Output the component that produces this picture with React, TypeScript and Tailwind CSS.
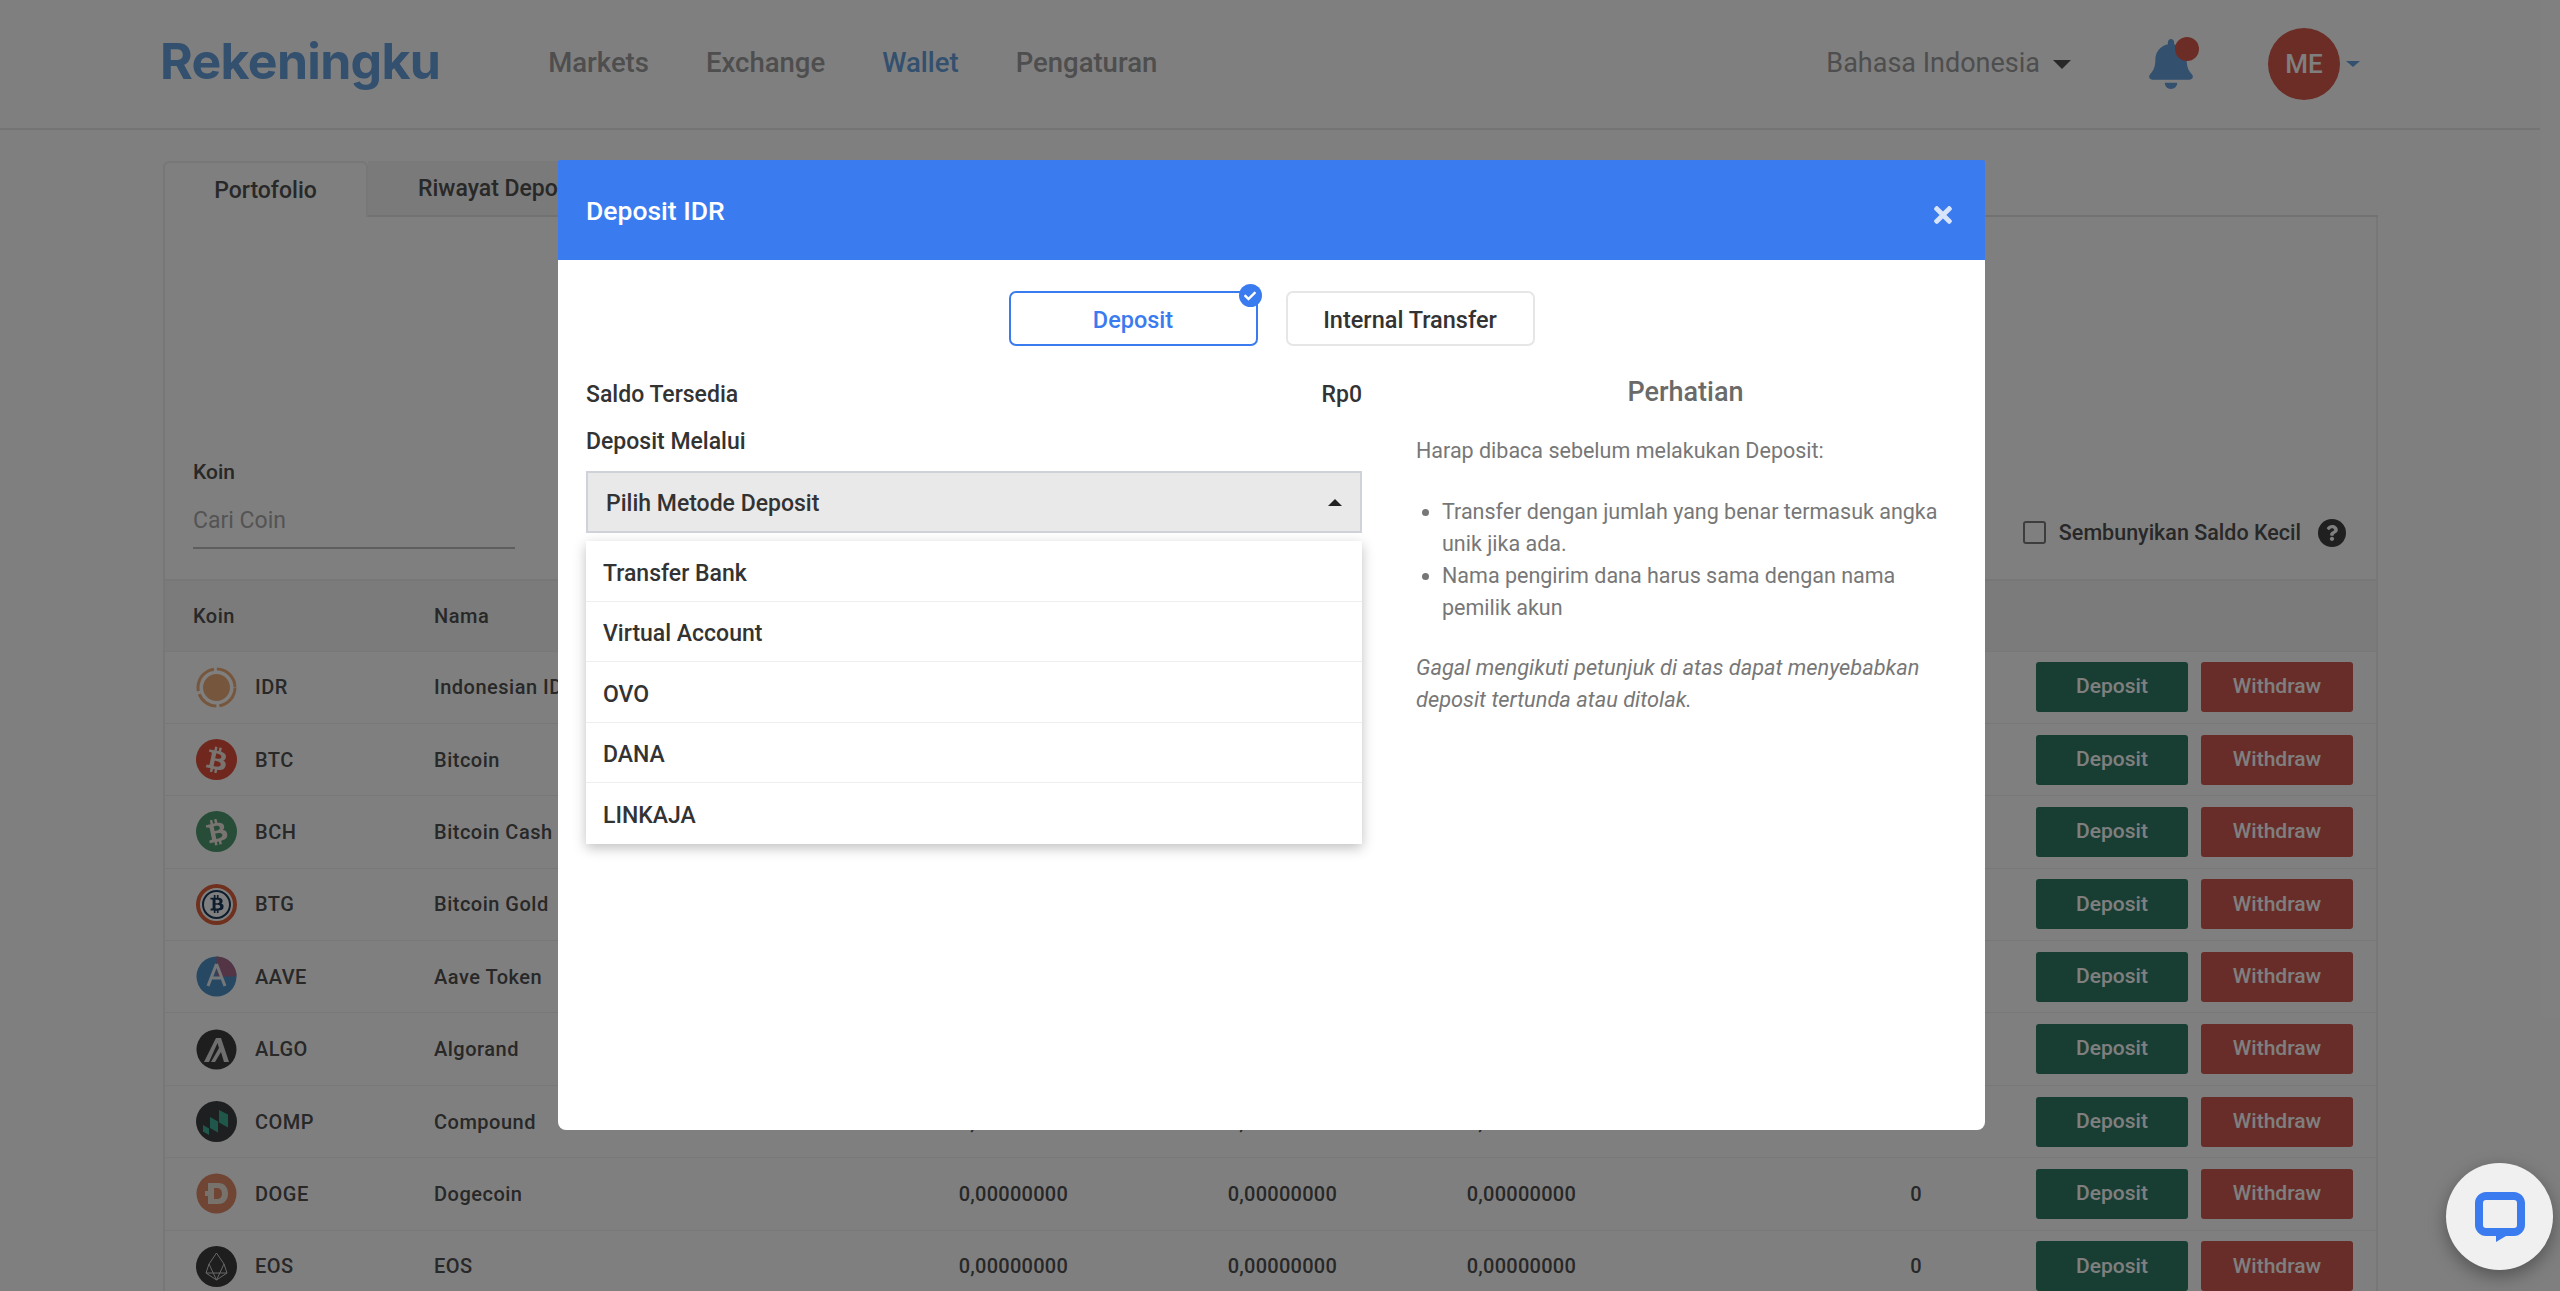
import { FaBell, FaBtc, FaCheck, FaQuestion, FaTimes } from 'react-icons/fa';

const navItems = [
  { name: 'Markets', active: false },
  { name: 'Exchange', active: false },
  { name: 'Wallet', active: true },
  { name: 'Pengaturan', active: false },
];

const coins = [
  { symbol: 'IDR', name: 'Indonesian IDR' },
  { symbol: 'BTC', name: 'Bitcoin' },
  { symbol: 'BCH', name: 'Bitcoin Cash' },
  { symbol: 'BTG', name: 'Bitcoin Gold' },
  { symbol: 'AAVE', name: 'Aave Token' },
  { symbol: 'ALGO', name: 'Algorand' },
  { symbol: 'COMP', name: 'Compound' },
  { symbol: 'DOGE', name: 'Dogecoin' },
  { symbol: 'EOS', name: 'EOS' },
];

const depositMethods = ['Transfer Bank', 'Virtual Account', 'OVO', 'DANA', 'LINKAJA'];

const CoinIcon = ({ symbol }: { symbol: string }) => {
  if (symbol === 'BTC' || symbol === 'BCH') {
    return (
      <div className={`flex h-[41px] w-[41px] items-center justify-center rounded-full ${symbol === 'BTC' ? 'bg-[#e0503c]' : 'bg-[#4e9a70]'}`}>
        <FaBtc className={`h-[26px] w-[26px] text-[#f4e8e0] ${symbol === 'BTC' ? 'rotate-12' : '-rotate-12'}`} />
      </div>
    );
  }
  if (symbol === 'BTG') {
    return (
      <div className="flex h-[41px] w-[41px] items-center justify-center rounded-full border-[4px] border-[#e0603c] bg-white">
        <div className="flex h-[29px] w-[29px] items-center justify-center rounded-full border-2 border-[#1c3a5c]">
          <FaBtc className="h-[18px] w-[18px] text-[#1c3a5c]" />
        </div>
      </div>
    );
  }
  return (
    <svg viewBox="0 0 41 41" className="h-[41px] w-[41px]">
      {symbol === 'IDR' && (
        <>
          <circle cx="20.5" cy="20.5" r="13.5" fill="#ecae7c" />
          <circle cx="20.5" cy="20.5" r="18.5" fill="none" stroke="#ecae7c" strokeWidth="3" strokeDasharray="26 3 22 3 30 3 28 3" />
        </>
      )}
      {symbol === 'AAVE' && (
        <>
          <circle cx="20.5" cy="20.5" r="20" fill="#4f90c6" />
          <path d="M20.5 0.5a20 20 0 0 1 20 20H20.5z" fill="#a86a8a" />
          <path d="M20.5 8 12 30M20.5 8 29 30M14 22h13" fill="none" stroke="#e8f0f4" strokeWidth="3" />
        </>
      )}
      {symbol === 'ALGO' && (
        <>
          <circle cx="20.5" cy="20.5" r="20" fill="#3c3c3c" />
          <path d="M8 33 20 9h5l8 24h-5l-3-10-6 10h-4l8-14-1.500-5L13 33z" fill="#dcdcdc" />
        </>
      )}
      {symbol === 'COMP' && (
        <>
          <circle cx="20.5" cy="20.5" r="20.5" fill="#3a3f42" />
          <path d="M7 24l6 3.500v6.500l-6-3.500zM14 16l8 4.500v11l-8-4.500zM23 9l9 4.500v13l-9-5z" fill="#3fae97" />
        </>
      )}
      {symbol === 'DOGE' && (
        <>
          <circle cx="20.5" cy="20.5" r="20" fill="#e08a68" />
          <path d="M12 10h10c7 0 10 5 10 10.500S29 31 22 31H12v-8H9v-5h3zM18 15v11h3c3.500 0 5-2.500 5-5.500S24.500 15 21 15z" fill="#f0e4d8" fillRule="evenodd" />
        </>
      )}
      {symbol === 'EOS' && (
        <>
          <circle cx="20.5" cy="20.5" r="20.5" fill="#3c3c3c" />
          <path d="M20.500 7 13 18l-3 9 10.500 7L31 27l-3-9zM13 18l7.500 16L28 18M20.500 7v0M10 27h21" fill="none" stroke="#cfcfcf" strokeWidth="1" />
        </>
      )}
    </svg>
  );
};

const CoinRow = ({ symbol, name }: { symbol: string; name: string }) => (
  <div className="grid h-[72.4px] grid-cols-[269px_435px_199px_269px_239px_346px_1fr] items-center border-t border-[#f0f0f0] text-[20px] font-medium tracking-[0.5px] text-[#505050]">
    <div className="flex items-center pl-[31px]">
      <CoinIcon symbol={symbol} />
      <span className="ml-[18px]">{symbol}</span>
    </div>
    <div>{name}</div>
    <div className="text-right tracking-[0.25px]">0,00000000</div>
    <div className="text-right tracking-[0.25px]">0,00000000</div>
    <div className="text-right tracking-[0.25px]">0,00000000</div>
    <div className="text-right">0</div>
    <div className="flex gap-[13px] pl-[114px] tracking-normal text-white">
      <button className="h-[50px] w-[152px] rounded-[3px] bg-[#307a66] text-[21px]">Deposit</button>
      <button className="h-[50px] w-[152px] rounded-[3px] bg-[#d05a50] text-[21px]">Withdraw</button>
    </div>
  </div>
);

const App = () => {
  return (
    <div className="relative h-[1291px] w-[2560px] overflow-hidden bg-white font-['Roboto',sans-serif]">
      {/* Page behind the modal */}
      <div className="w-[2540px]">
        <nav className="flex h-[130px] items-center border-b-2 border-[#e8e8e8] pl-[160px]">
          <a className="-mt-[6px] font-['Inter',sans-serif] text-[50px] font-bold tracking-[-0.7px] text-[#66a0de]">Rekeningku</a>
          <div className="-mt-[2px] ml-[108px] flex gap-[57px] text-[27.500px] font-medium text-[#9c9c9c]">
            {navItems.map((item) => (
              <a key={item.name} className={item.active ? 'text-[#66a0de]' : ''}>
                {item.name}
              </a>
            ))}
          </div>
          <div className="ml-auto flex items-center pr-[180px]">
            <span className="-mt-[2px] text-[27px] text-[#9c9c9c]">Bahasa Indonesia</span>
            <span className="ml-[13px] h-0 w-0 border-x-[9px] border-t-[9px] border-x-transparent border-t-[#505050]" />
            <div className="relative ml-[78px]">
              <FaBell className="h-[50px] w-[44px] text-[#66a0de]" />
              <span className="absolute -right-[6px] -top-[2px] h-[24px] w-[24px] rounded-full bg-[#d85a4c]" />
            </div>
            <div className="ml-[75px] flex h-[72px] w-[72px] items-center justify-center rounded-full bg-[#d85a4c] text-[26px] font-medium text-white">
              ME
            </div>
            <span className="ml-[6px] h-0 w-0 border-x-[7px] border-t-[6px] border-x-transparent border-t-[#66a0de]" />
          </div>
        </nav>

        <main className="ml-[163px] mt-[31px] w-[2215px]">
          <div className="flex h-[56px] text-[23px] font-medium text-[#505050]">
            <div className="flex w-[205px] items-center justify-center rounded-t-[6px] border-x-2 border-t-2 border-[#eeeeee] pt-[3px]">Portofolio</div>
            <div className="flex w-[300px] items-center border-b-2 border-[#e4e4e4] bg-[#f4f4f4] pl-[50px] pt-[3px]">Riwayat Deposit</div>
            <div className="flex-1 border-b-2 border-[#e4e4e4]" />
          </div>

          <div className="border-x-2 border-[#eeeeee]">
            <div className="flex h-[362px] items-end justify-between pb-[30px] pl-[28px] pr-[30px]">
              <div className="w-[322px]">
                <div className="text-[21px] font-medium text-[#505050]">Koin</div>
                <div className="mt-[15px] border-b-2 border-[#bcbcbc] pb-[9px] text-[23px] text-[#a8a8a8]">Cari Coin</div>
              </div>
              <div className="flex items-center text-[21.500px] font-medium text-[#505050]">
                <span className="h-[23px] w-[23px] rounded-[3px] border-2 border-[#7a7a7a] bg-white" />
                <span className="ml-[13px]">Sembunyikan Saldo Kecil</span>
                <span className="ml-[17px] flex h-[28px] w-[28px] items-center justify-center rounded-full bg-[#404040]">
                  <FaQuestion className="h-[16px] w-[16px] text-white" />
                </span>
              </div>
            </div>
            <div className="grid h-[71.500px] grid-cols-[269px_1fr] items-center border-t-2 border-[#eeeeee] bg-[#f6f6f6] text-[20px] font-medium tracking-[0.5px] text-[#505050]">
              <div className="pl-[28px]">Koin</div>
              <div>Nama</div>
            </div>
            {coins.map((coin) => (
              <CoinRow key={coin.symbol} symbol={coin.symbol} name={coin.name} />
            ))}
          </div>
        </main>
      </div>

      {/* Modal */}
      <div className="absolute inset-0 bg-black/50 pl-[558px] pt-[160px]">
        <div className="h-[970px] w-[1427px] rounded-[8px] bg-white">
          <div className="flex h-[100px] items-center justify-between rounded-t-[2px] bg-[#3b7bf0] pl-[28px] pr-[30px] text-white">
            <h2 className="pt-[1px] text-[26.500px] font-medium">Deposit IDR</h2>
            <FaTimes className="mt-[10px] h-[26px] w-[24px] text-[#d8e4fa]" />
          </div>

          <div className="px-[28px]">
            <div className="flex justify-center gap-[28px] pt-[31px] text-[23.500px] font-medium">
              <button className="relative h-[55px] w-[249px] rounded-[7px] border-2 border-[#3b7bf0] pt-[4px] text-[#3b7bf0]">
                Deposit
                <span className="absolute -right-[6px] -top-[9px] flex h-[23px] w-[23px] items-center justify-center rounded-full bg-[#3b7bf0]">
                  <FaCheck className="h-[12px] w-[12px] text-white" />
                </span>
              </button>
              <button className="h-[55px] w-[249px] rounded-[7px] border-2 border-[#e6e6e6] pt-[4px] text-[#333333]">Internal Transfer</button>
            </div>

            <div className="mt-[33px] flex">
              <div className="w-[776px]">
                <div className="flex h-[30px] items-center justify-between pt-[2px] text-[23px] font-medium text-[#333333]">
                  <span>Saldo Tersedia</span>
                  <span>Rp0</span>
                </div>
                <div className="mt-[17px] flex h-[30px] items-center pt-[2px] text-[23px] font-medium text-[#333333]">Deposit Melalui</div>
                <div className="relative mt-[15px]">
                  <div className="flex h-[62px] items-center justify-between border-2 border-[#cfd2d8] bg-[#e9e9e9] px-[18px] text-[23px] font-medium text-[#333333]">
                    <span className="pt-[4px]">Pilih Metode Deposit</span>
                    <span className="h-0 w-0 border-x-[7px] border-b-[7px] border-x-transparent border-b-[#222222]" />
                  </div>
                  <ul className="absolute left-0 right-0 top-[70px] bg-white shadow-[0_4px_12px_rgba(0,0,0,0.25)]">
                    {depositMethods.map((method) => (
                      <li key={method} className="flex h-[60.600px] items-center border-b border-[#eeeeee] pl-[17px] pt-[6px] text-[23px] font-medium text-[#333333] last:border-b-0">
                        {method}
                      </li>
                    ))}
                  </ul>
                </div>
              </div>

              <div className="ml-[54px] w-[525px] text-[21.500px] leading-[32px] text-[#777777]">
                <h3 className="h-[30px] pl-[14px] text-center text-[27px] leading-[26px] font-medium text-[#6a6a6a]">Perhatian</h3>
                <p className="mt-[26px]">Harap dibaca sebelum melakukan Deposit:</p>
                <ul className="mt-[29px] list-disc pl-[26px]">
                  <li>Transfer dengan jumlah yang benar termasuk angka unik jika ada.</li>
                  <li>Nama pengirim dana harus sama dengan nama pemilik akun</li>
                </ul>
                <p className="mt-[28px] text-[21.800px] italic">Gagal mengikuti petunjuk di atas dapat menyebabkan deposit tertunda atau ditolak.</p>
              </div>
            </div>
          </div>
        </div>
      </div>

      {/* Chat widget */}
      <button className="absolute bottom-[21px] right-[7px] flex h-[107px] w-[107px] items-center justify-center rounded-full bg-[#f0f0f0] shadow-[0_6px_18px_rgba(0,0,0,0.35)]">
        <svg viewBox="0 0 50 50" className="h-[50px] w-[50px]">
          <path
            d="M11 0h28c6 0 11 5 11 11v22c0 6-5 11-11 11h-8l-10 6v-6H11C5 44 0 39 0 33V11C0 5 5 0 11 0zm0 8c-2 0-3 1-3 3v22c0 2 1 3 3 3h28c2 0 3-1 3-3V11c0-2-1-3-3-3z"
            fill="#3b7bf0"
            fillRule="evenodd"
          />
        </svg>
      </button>
    </div>
  );
};

export default App;
